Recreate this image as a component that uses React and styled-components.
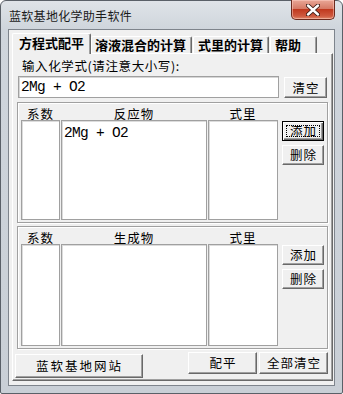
import React from "react";
import styled, { createGlobalStyle } from "styled-components";

const GlobalStyle = createGlobalStyle`
  html, body { margin: 0; padding: 0; background: #fff; }
  body {
    font-family: "Noto Sans CJK SC", "Noto Sans", sans-serif;
    font-size: 12px;
    color: #000;
  }
  * { box-sizing: border-box; }
`;

const Window = styled.div`
  width: 343px;
  height: 394px;
  display: flex;
  flex-direction: column;
  background: linear-gradient(#dfe3e8, #cfd5dc 28px, #c9cfd6);
  border: 1px solid #5a6068;
  border-radius: 6px 6px 2px 2px;
  padding: 0 7px 7px;
`;

const TitleBar = styled.div`
  height: 28px;
  display: flex;
  justify-content: space-between;
  align-items: flex-start;
`;

const Title = styled.div`
  margin: 8px 0 0 1px;
  font-size: 12px;
  line-height: 14px;
  letter-spacing: 0.3px;
  color: #1a1a1a;
`;

const CloseButton = styled.div`
  width: 44px;
  height: 20px;
  margin-top: -1px;
  display: flex;
  align-items: center;
  justify-content: center;
  border: 1px solid #6b2a1e;
  border-top: none;
  border-radius: 0 0 5px 5px;
  background: linear-gradient(#e9a797, #d67a66 45%, #c0391f 50%, #cf5a40 85%, #e08a6c);
  box-shadow: inset 0 0 0 1px rgba(255, 210, 200, 0.5);
`;

const Client = styled.div`
  flex: 1;
  display: flex;
  flex-direction: column;
  background: #f0f0f0;
  border: 1px solid #7e848c;
  padding: 3px 1px 4px 3px;
`;

const TabStrip = styled.div`
  height: 20px;
  display: flex;
  align-items: flex-end;
  position: relative;
  z-index: 1;
`;

const Tab = styled.div`
  width: ${(p) => p.w}px;
  height: ${(p) => (p.active ? 21 : 17)}px;
  margin-bottom: ${(p) => (p.active ? -1 : 0)}px;
  margin-right: ${(p) => p.gap || 0}px;
  padding-left: ${(p) => p.pad}px;
  background: #f0f0f0;
  border-top: 1px solid #fff;
  border-left: 1px solid #fff;
  border-right: 1px solid #696969;
  border-radius: 2px 2px 0 0;
  box-shadow: inset -1px 0 0 #a0a0a0;
  font-weight: 700;
  font-size: 13px;
  line-height: ${(p) => (p.active ? 18 : 16)}px;
  white-space: nowrap;
`;

const Panel = styled.div`
  flex: 1;
  display: flex;
  flex-direction: column;
  border-top: 1px solid #fff;
  border-left: 1px solid #fff;
  border-right: 1px solid #696969;
  border-bottom: 1px solid #696969;
  box-shadow: inset -1px -1px 0 #a0a0a0;
`;

const Label = styled.div`
  margin: 5px 0 0 9px;
  font-size: 12.5px;
  line-height: 14px;
  letter-spacing: 0.6px;
`;

const InputRow = styled.div`
  display: flex;
  align-items: flex-start;
  gap: 5px;
  margin: 3px 0 0 5px;
`;

const Mono = `"Liberation Mono", "DejaVu Sans Mono", monospace`;

const TextBox = styled.div`
  width: 261px;
  height: 22px;
  background: #fff;
  border: 1px solid #a0a0a0;
  box-shadow: inset 1px 1px 0 #d6d6d6;
  padding: 0 0 0 2px;
  font-family: ${Mono};
  font-size: 14.5px;
  letter-spacing: -0.7px;
  line-height: 20px;
  white-space: pre;
`;

const Button = styled.div`
  width: ${(p) => p.w}px;
  height: ${(p) => p.h || 21}px;
  margin-top: ${(p) => p.mt || 0}px;
  display: flex;
  align-items: center;
  justify-content: center;
  background: #f0f0f0;
  border-top: 1px solid #fff;
  border-left: 1px solid #fff;
  border-right: 1px solid #696969;
  border-bottom: 1px solid #696969;
  box-shadow: inset -1px -1px 0 #a0a0a0;
  font-size: 12.5px;
  letter-spacing: 1px;
  padding-left: 1px;
  line-height: 14px;
`;

const FocusButton = styled(Button)`
  border: 1px solid #000;
  box-shadow: inset 1px 1px 0 #fff, inset -1px -1px 0 #696969, inset -2px -2px 0 #a0a0a0;
  position: relative;
  &::after {
    content: "";
    position: absolute;
    inset: 3px 3px 3px 3px;
    border: 1px dotted #000;
  }
`;

const Group = styled.div`
  width: 311px;
  height: ${(p) => p.h}px;
  margin: ${(p) => p.mt}px 0 0 4px;
  border: 1px solid #a0a0a0;
  box-shadow: inset 1px 1px 0 #fff, 1px 1px 0 #fff;
  padding: 0 3px 0 3px;
  display: grid;
  grid-template-columns: 39px 146px 70px 42px;
  grid-template-rows: 17px 1fr;
  column-gap: 1px;
`;

const Header = styled.div`
  text-align: center;
  font-size: 12.5px;
  line-height: 14px;
  padding-top: ${(p) => p.pt}px;
  letter-spacing: 1px;
`;

const ListBox = styled.div`
  background: #fff;
  border: 1px solid #a0a0a0;
  box-shadow: inset 1px 1px 0 #dcdcdc;
  margin-bottom: 2px;
  padding: 5px 0 0 2px;
  font-family: ${Mono};
  font-size: 14.5px;
  letter-spacing: -0.7px;
  line-height: 14px;
  white-space: pre;
`;

const ButtonColumn = styled.div`
  grid-row: 2;
  grid-column: 4;
  margin-left: 3px;
  display: flex;
  flex-direction: column;
  gap: 4px;
  padding-top: 1px;
`;

const Footer = styled.div`
  display: flex;
  align-items: flex-start;
  margin: 3px 4px 0 2px;
  gap: 2px;
`;

const WideButton = styled(Button)`
  margin-right: auto;
  letter-spacing: 2px;
`;

const CloseIcon = () => (
  <svg width="14" height="12" viewBox="0 0 14 12">
    <path
      d="M2 1.5 L12 10.5 M12 1.5 L2 10.5"
      stroke="#3a1a14"
      strokeWidth="4.2"
      strokeLinecap="round"
    />
    <path
      d="M2 1.5 L12 10.5 M12 1.5 L2 10.5"
      stroke="#fff"
      strokeWidth="2.4"
      strokeLinecap="round"
    />
  </svg>
);

const SpeciesGroup = ({ h, mt, title, content, focused }) => (
  <Group h={h} mt={mt}>
    <Header pt={4}>系数</Header>
    <Header pt={4}>{title}</Header>
    <Header pt={4}>式里</Header>
    <div />
    <ListBox />
    <ListBox>{content}</ListBox>
    <ListBox />
    <ButtonColumn>
      {focused ? <FocusButton w={42} h={20}>添加</FocusButton> : <Button w={42} h={20}>添加</Button>}
      <Button w={42} h={20}>删除</Button>
    </ButtonColumn>
  </Group>
);

const tabs = [
  { label: "方程式配平", w: 79, pad: 6, active: true },
  { label: "溶液混合的计算", w: 101, pad: 3, gap: 1 },
  { label: "式里的计算", w: 76, pad: 4, gap: 1 },
  { label: "帮助", w: 47, pad: 4 },
];

export default function App() {
  return (
    <>
      <GlobalStyle />
      <Window>
        <TitleBar>
          <Title>蓝软基地化学助手软件</Title>
          <CloseButton>
            <CloseIcon />
          </CloseButton>
        </TitleBar>
        <Client>
          <TabStrip>
            {tabs.map((t) => (
              <Tab key={t.label} w={t.w} pad={t.pad} gap={t.gap} active={t.active}>
                {t.label}
              </Tab>
            ))}
          </TabStrip>
          <Panel>
            <Label>输入化学式(请注意大小写):</Label>
            <InputRow>
              <TextBox>2Mg + O2</TextBox>
              <Button w={43} mt={1}>清空</Button>
            </InputRow>
            <SpeciesGroup h={121} mt={4} title="反应物" content="2Mg + O2" focused />
            <SpeciesGroup h={123} mt={3} title="生成物" />
            <Footer>
              <WideButton w={128} h={24} mt={2}>蓝软基地网站</WideButton>
              <Button w={69} h={22}>配平</Button>
              <Button w={69} h={22}>全部清空</Button>
            </Footer>
          </Panel>
        </Client>
      </Window>
    </>
  );
}
